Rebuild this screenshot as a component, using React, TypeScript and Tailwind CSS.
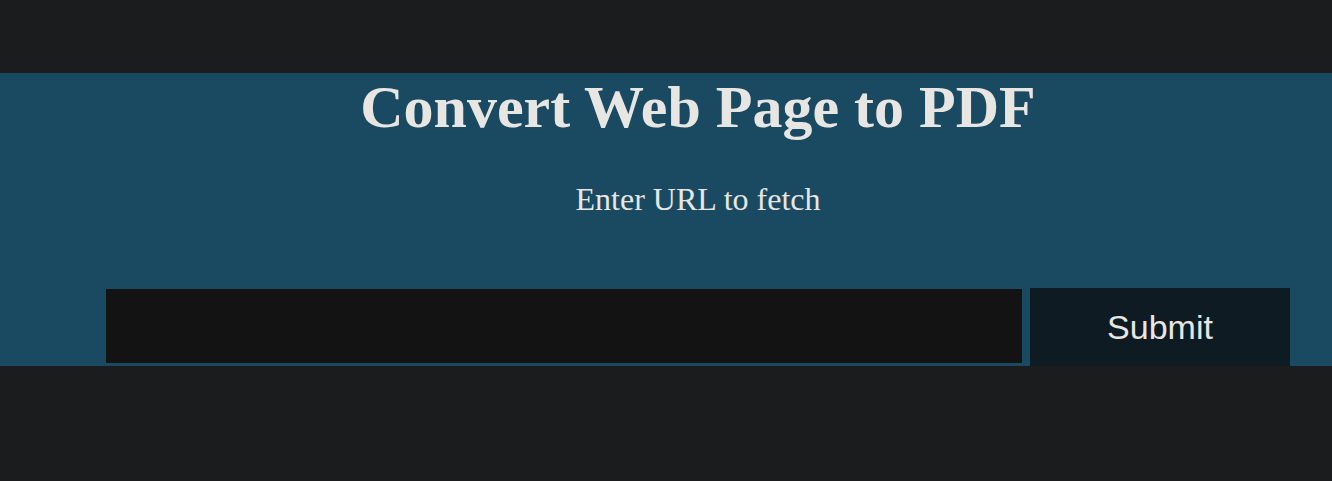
export default function App() {
  return (
    <div className="min-h-[481px] w-full bg-[#1b1c1e]">
      <div className="h-[73px]" />
      <section className="bg-[#194a62] pl-16">
        <div className="flex flex-col items-center pt-1">
          <h1 className="text-[60px] leading-[60px] font-bold text-[#e8e6e3] [font-family:'Liberation_Serif',serif]">
            Convert Web Page to PDF
          </h1>
          <p className="mt-[46px] text-[32px] leading-[32px] text-[#e8e6e3] [font-family:'Liberation_Serif',serif]">
            Enter URL to fetch
          </p>
        </div>
        <form
          className="mt-[73px] flex items-start gap-2 px-[42px]"
          onSubmit={(e) => e.preventDefault()}
        >
          <input
            type="text"
            className="mt-px h-[74px] flex-1 bg-[#131313] px-3 text-[24px] text-[#e8e6e3] outline-none"
          />
          <button
            type="submit"
            className="h-[78px] w-[260px] bg-[#0e1b22] text-[34px] text-[#e8e6e3] [font-family:'Liberation_Sans',sans-serif]"
          >
            Submit
          </button>
        </form>
      </section>
    </div>
  );
}
